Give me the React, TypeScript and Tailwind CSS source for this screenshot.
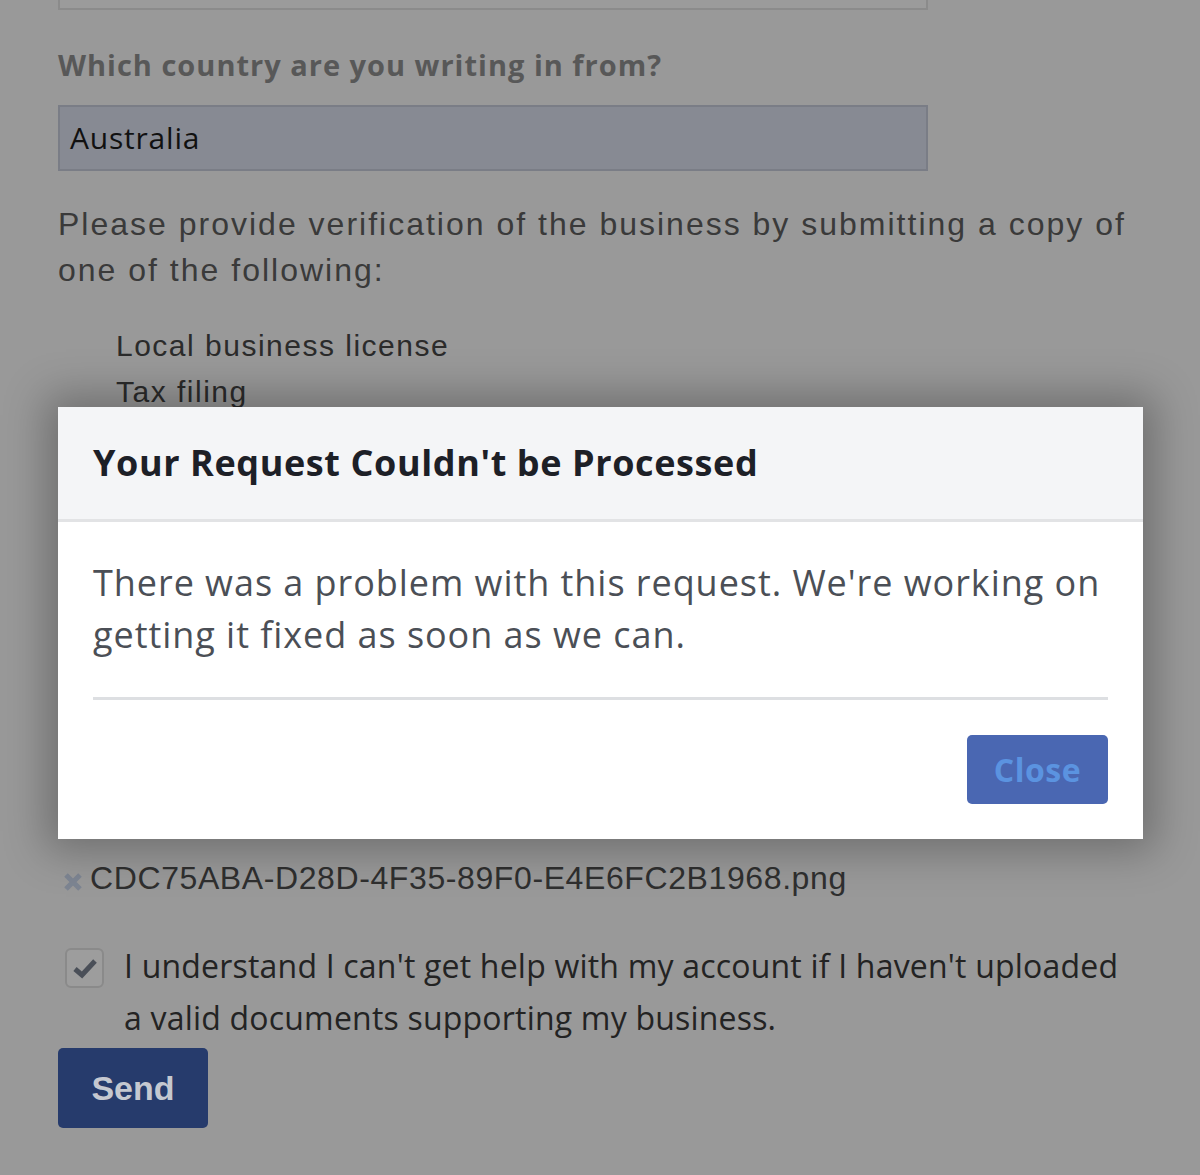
import React from "react";

const proxima = { fontFamily: '"Open Sans", "Liberation Sans", sans-serif' };
const helv = { fontFamily: '"Liberation Sans", Arial, sans-serif' };

export default function App() {
  return (
    <div className="relative w-[1200px] h-[1175px] overflow-hidden bg-[#999999]">
      {/* dimmed form underneath the dialog */}
      <div className="pl-[58px] pr-[60px]">
        <div className="w-[870px] h-[10px] border-x-2 border-b-2 border-[#8b8b8b] bg-[#9b9b9b]" />
        <div style={proxima} className="mt-[35px] text-[29px] leading-[40px] font-bold tracking-[1px] text-[#585858]">
          Which country are you writing in from?
        </div>
        <div className="mt-[20px] w-[870px] h-[66px] border-2 border-[#7a7d86] bg-[#878a93] flex items-center px-[10px]">
          <span style={proxima} className="text-[30px] tracking-[0.8px] text-[#111111] -mt-[2px]">Australia</span>
        </div>
        <p style={helv} className="mt-[30px] text-[32px] leading-[46px] tracking-[2px] text-[#3a3a3a]">
          Please provide verification of the business by submitting a copy of one of the following:
        </p>
        <ul style={helv} className="mt-[30px] pl-[58px] h-[92px] text-[30px] leading-[46px] tracking-[1.5px] text-[#2b2b2b]">
          <li>Local business license</li>
          <li>Tax filing</li>
        </ul>
      </div>

      <div className="absolute left-0 top-[852px] w-full pl-[58px] pr-[60px]">
        <div className="flex items-center">
          <svg width="22" height="22" viewBox="0 0 22 22" className="mt-[8px] mr-[6px] ml-[4px]">
            <path d="M4 4 L18 18 M18 4 L4 18" stroke="#7d8592" strokeWidth="5" strokeLinecap="butt" />
          </svg>
          <span style={helv} className="text-[32px] leading-[52px] tracking-[0.6px] text-[#2f2f2f]">
            CDC75ABA-D28D-4F35-89F0-E4E6FC2B1968.png
          </span>
        </div>
        <div className="mt-[38px] flex items-start">
          <div className="mt-[6px] ml-[7px] w-[39px] h-[40px] shrink-0 rounded-[6px] border-2 border-[#8a8a8a] bg-[#9d9d9d] flex items-center justify-center">
            <svg width="26" height="22" viewBox="0 0 26 22">
              <path d="M3 12 L10 18 L23 4" fill="none" stroke="#4a4f58" strokeWidth="5" />
            </svg>
          </div>
          <p style={proxima} className="ml-[20px] -mt-[2px] text-[32px] leading-[52px] tracking-[0.2px] text-[#232323]">
            I understand I can't get help with my account if I haven't uploaded a valid documents supporting my business.
          </p>
        </div>
        <button
          style={helv}
          className="mt-[4px] w-[150px] h-[80px] rounded-[5px] bg-[#263b6c] text-[34px] font-bold text-[#c5c8d0]"
        >
          Send
        </button>
      </div>

      {/* dialog */}
      <div className="absolute left-[58px] top-[407px] w-[1085px] h-[432px] bg-white shadow-[0_0_40px_12px_rgba(0,0,0,0.28)] flex flex-col">
        <div className="h-[115px] shrink-0 bg-[#f4f5f7] border-b-[3px] border-[#e2e3e5] flex items-center px-[35px]">
          <h2 style={proxima} className="text-[36px] font-bold tracking-[0.6px] text-[#1d2027]">
            Your Request Couldn't be Processed
          </h2>
        </div>
        <div className="px-[35px]">
          <p style={proxima} className="mt-[35px] text-[36px] leading-[52px] tracking-[0.95px] text-[#4b4f56]">
            There was a problem with this request. We're working on getting it fixed as soon as we can.
          </p>
          <div className="mt-[36px] h-[3px] bg-[#dddfe2]" />
          <div className="mt-[35px] flex justify-end">
            <button
              style={proxima}
              className="w-[141px] h-[69px] rounded-[5px] bg-[#4a67b2] text-[32px] font-bold tracking-[0.5px] text-[#5b93e0]"
            >
              Close
            </button>
          </div>
        </div>
      </div>
    </div>
  );
}
